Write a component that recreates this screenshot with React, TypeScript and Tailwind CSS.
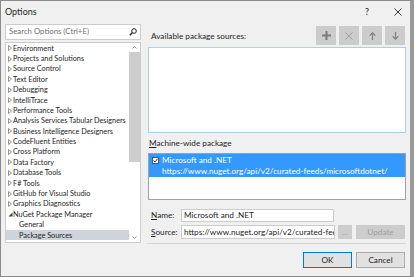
import React from "react";

const treeItems: { label: string; kind: "closed" | "open" | "child"; selected?: boolean }[] = [
  { label: "Environment", kind: "closed" },
  { label: "Projects and Solutions", kind: "closed" },
  { label: "Source Control", kind: "closed" },
  { label: "Text Editor", kind: "closed" },
  { label: "Debugging", kind: "closed" },
  { label: "IntelliTrace", kind: "closed" },
  { label: "Performance Tools", kind: "closed" },
  { label: "Analysis Services Tabular Designers", kind: "closed" },
  { label: "Business Intelligence Designers", kind: "closed" },
  { label: "CodeFluent Entities", kind: "closed" },
  { label: "Cross Platform", kind: "closed" },
  { label: "Data Factory", kind: "closed" },
  { label: "Database Tools", kind: "closed" },
  { label: "F# Tools", kind: "closed" },
  { label: "GitHub for Visual Studio", kind: "closed" },
  { label: "Graphics Diagnostics", kind: "closed" },
  { label: "NuGet Package Manager", kind: "open" },
  { label: "General", kind: "child" },
  { label: "Package Sources", kind: "child", selected: true },
  { label: "Office Tools", kind: "closed" },
];

const Expander = ({ open }: { open: boolean }) =>
  open ? (
    <svg width="5" height="5" viewBox="0 0 5 5" className="shrink-0">
      <path d="M4.5 0.5 L4.5 4.5 L0.5 4.5 Z" fill="#404040" />
    </svg>
  ) : (
    <svg width="4" height="6" viewBox="0 0 4 6" className="shrink-0">
      <path d="M0.5 0.5 L3.5 3 L0.5 5.5 Z" fill="none" stroke="#7a7a7a" strokeWidth="0.8" />
    </svg>
  );

const ToolButton = ({ children }: { children: React.ReactNode }) => (
  <div className="w-[20px] h-[19px] bg-[#cccccc] flex items-center justify-center">{children}</div>
);

export default function App() {
  return (
    <div
      className="w-[414px] h-[277px] bg-[#f0f0f0] border-l border-t border-b border-[#8a8a8a] border-r-[4px] border-r-[#9a9a9a] flex flex-col text-[#1e1e1e] overflow-hidden"
      style={{ fontFamily: 'Lato, "Noto Sans", sans-serif' }}
    >
      {/* title bar */}
      <div className="h-[22px] flex items-center pl-[4px] text-[9px] shrink-0">
        <span className="flex-1">Options</span>
        <span className="w-[10px] text-center mr-[22px]">?</span>
        <svg width="8" height="8" viewBox="0 0 8 8" className="mr-[8px]">
          <path d="M0.5 0.5 L7.5 7.5 M7.5 0.5 L0.5 7.5" stroke="#222" strokeWidth="0.9" />
        </svg>
      </div>

      <div className="flex flex-1 min-h-0 pl-[4px] pt-[1px] text-[8.2px]">
        {/* left column */}
        <div className="w-[136px] flex flex-col shrink-0">
          <div className="h-[16px] bg-white border border-[#cccccc] flex items-center pl-[3px] pr-[3px] text-[7.8px]">
            <span className="flex-1 text-[#717171]">Search Options (Ctrl+E)</span>
            <svg width="8" height="8" viewBox="0 0 8 8">
              <circle cx="5" cy="3" r="2.3" fill="none" stroke="#1e1e1e" strokeWidth="1" />
              <path d="M3.3 4.7 L0.8 7.2" stroke="#1e1e1e" strokeWidth="1.3" />
            </svg>
          </div>
          <div className="mt-[2px] h-[201px] bg-white border border-[#cccccc] flex overflow-hidden text-[7.3px]">
            <div className="flex-1 flex flex-col overflow-hidden">
              {treeItems.map((it) => (
                <div
                  key={it.label}
                  className={`h-[10.4px] shrink-0 flex items-center whitespace-nowrap leading-none ${
                    it.selected ? "bg-[#cfd3dc]" : ""
                  }`}
                >
                  {it.kind === "child" ? (
                    <span className="pl-[13px]">{it.label}</span>
                  ) : (
                    <>
                      <span className="w-[7px] pl-[2px] flex items-center">
                        <Expander open={it.kind === "open"} />
                      </span>
                      <span>{it.label}</span>
                    </>
                  )}
                </div>
              ))}
            </div>
            <div className="w-[11px] flex flex-col items-center shrink-0">
              <div className="h-[9px] flex items-center justify-center">
                <svg width="5" height="3" viewBox="0 0 5 3">
                  <path d="M0.5 2.5 L2.5 0.5 L4.5 2.5" fill="none" stroke="#8a8a8a" strokeWidth="0.8" />
                </svg>
              </div>
              <div className="w-[11px] h-[110px] bg-[#cdcdcd]" />
              <div className="flex-1" />
              <div className="h-[9px] flex items-center justify-center">
                <svg width="5" height="3" viewBox="0 0 5 3">
                  <path d="M0.5 0.5 L2.5 2.5 L4.5 0.5" fill="none" stroke="#8a8a8a" strokeWidth="0.8" />
                </svg>
              </div>
            </div>
          </div>
        </div>

        {/* right column */}
        <div className="w-[258px] ml-[7px] flex flex-col shrink-0">
          <div className="h-[19px] mt-[2px] flex items-center">
            <span className="flex-1 pl-[3px] pt-[2px]">Available package sources:</span>
            <div className="flex gap-[3px] mr-[1px]">
              <ToolButton>
                <svg width="9" height="9" viewBox="0 0 9 9">
                  <path d="M4.5 0 V9 M0 4.5 H9" stroke="#7b7b7b" strokeWidth="2" />
                </svg>
              </ToolButton>
              <ToolButton>
                <svg width="8" height="8" viewBox="0 0 8 8">
                  <path d="M0.5 0.5 L7.5 7.5 M7.5 0.5 L0.5 7.5" stroke="#9a9a9a" strokeWidth="0.9" />
                </svg>
              </ToolButton>
              <ToolButton>
                <svg width="7" height="8" viewBox="0 0 7 8">
                  <path d="M3.5 8 V1 M0.7 3.6 L3.5 0.8 L6.3 3.6" fill="none" stroke="#7b7b7b" strokeWidth="1.1" />
                </svg>
              </ToolButton>
              <ToolButton>
                <svg width="7" height="8" viewBox="0 0 7 8">
                  <path d="M3.5 0 V7 M0.7 4.4 L3.5 7.2 L6.3 4.4" fill="none" stroke="#7b7b7b" strokeWidth="1.1" />
                </svg>
              </ToolButton>
            </div>
          </div>
          <div className="mt-[2px] h-[86px] bg-white border border-[#a9d0f0]" />
          <div className="h-[20px] flex items-center pl-[1px]">
            <span>
              <span className="underline">M</span>achine-wide package
            </span>
          </div>
          <div className="h-[47px] bg-white border border-[#a0a0a0] flex flex-col">
            <div className="h-[23px] bg-[#3399ff] text-white flex pl-[3px] pt-[1px]">
              <div className="w-[7px] h-[7px] bg-white border border-[#555] mt-[2px] flex items-center justify-center shrink-0">
                <svg width="5" height="5" viewBox="0 0 5 5">
                  <path d="M0.5 2.6 L2 4 L4.6 0.8" fill="none" stroke="#333" strokeWidth="0.9" />
                </svg>
              </div>
              <div className="flex flex-col ml-[3px] leading-[11px]">
                <span>Microsoft and .NET</span>
                <span>https://www.nuget.org/api/v2/curated-feeds/microsoftdotnet/</span>
              </div>
            </div>
          </div>
          <div className="mt-[9px] h-[13px] flex items-center">
            <span className="w-[33px] pl-[3px]">
              <span className="underline">N</span>ame:
            </span>
            <div className="w-[153px] h-[13px] bg-white border border-[#cccccc] flex items-center pl-[2px]">
              Microsoft and .NET
            </div>
          </div>
          <div className="mt-[3px] h-[14px] flex items-center">
            <span className="w-[33px] pl-[3px]">
              <span className="underline">S</span>ource:
            </span>
            <div className="w-[154px] h-[14px] bg-white border border-[#cccccc] pl-[2px] overflow-hidden whitespace-nowrap leading-[12px]">
              https://www.nuget.org/api/v2/curated-feeds/microsoftdotnet/
            </div>
            <div className="ml-[3px] w-[14px] h-[14px] bg-[#cccccc] text-[#a0a0a0] flex items-center justify-center">...</div>
            <div className="ml-[4px] w-[49px] h-[14px] bg-[#cccccc] text-[#a0a0a0] flex items-center justify-center">Update</div>
          </div>
          <div className="mt-[4px] h-px bg-[#d5d5d5] -ml-[1px]" />
          <div className="mt-[8px] flex justify-end gap-[4px] mr-[1px]">
            <div className="w-[49px] h-[16px] bg-[#e1e1e1] border border-[#0078d7] flex items-center justify-center">OK</div>
            <div className="w-[49px] h-[16px] bg-[#e1e1e1] border border-[#adadad] flex items-center justify-center">Cancel</div>
          </div>
        </div>
      </div>
    </div>
  );
}
